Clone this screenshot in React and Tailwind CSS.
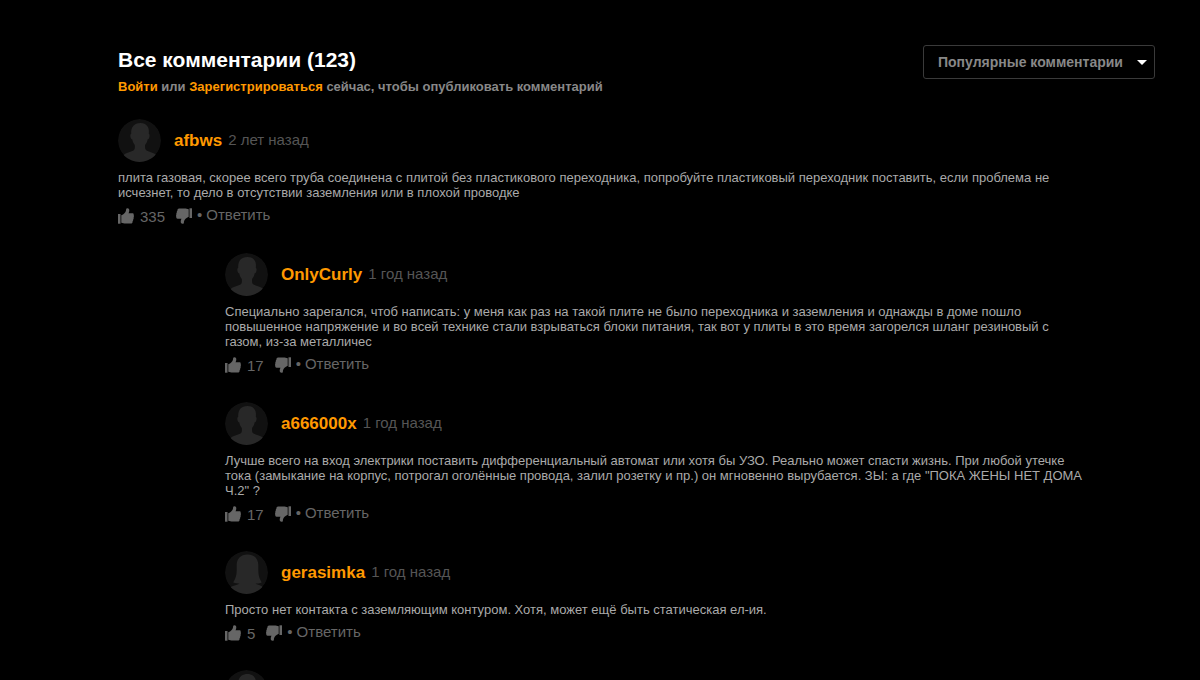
const comments = [
  {
    id: 1,
    author: "afbws",
    time: "2 лет назад",
    likes: 335,
    text: "плита газовая, скорее всего труба соединена с плитой без пластикового переходника, попробуйте пластиковый переходник поставить, если проблема не исчезнет, то дело в отсутствии заземления или в плохой проводке",
    replies: [
      {
        id: 2,
        author: "OnlyCurly",
        time: "1 год назад",
        likes: 17,
        text: "Специально зарегался, чтоб написать: у меня как раз на такой плите не было переходника и заземления и однажды в доме пошло повышенное напряжение и во всей технике стали взрываться блоки питания, так вот у плиты в это время загорелся шланг резиновый с газом, из-за металличес",
      },
      {
        id: 3,
        author: "a666000x",
        time: "1 год назад",
        likes: 17,
        text: 'Лучше всего на вход электрики поставить дифференциальный автомат или хотя бы УЗО. Реально может спасти жизнь. При любой утечке тока (замыкание на корпус, потрогал оголённые провода, залил розетку и пр.) он мгновенно вырубается. ЗЫ: а где "ПОКА ЖЕНЫ НЕТ ДОМА Ч.2" ?',
      },
      {
        id: 4,
        author: "gerasimka",
        time: "1 год назад",
        likes: 5,
        female: true,
        text: "Просто нет контакта с заземляющим контуром. Хотя, может ещё быть статическая ел-ия.",
      },
      { id: 5 },
    ],
  },
];

function Avatar({ female }) {
  return (
    <svg viewBox="0 0 43 43" className="h-[43px] w-[43px] shrink-0 rounded-full" aria-hidden="true">
      <circle cx="21.5" cy="21.5" r="21.5" fill="#111111" />
      {female ? (
        <path
          d="M22.500 3.500C15.500 3.500 11.800 8 11.700 14c0 6 .3 10-1.700 14-.6 1.500-1.500 2.500-1.700 3.500 2 .8 4.500 1 6.200 1.200-2 1.300-6 1.800-9 3.300V43h33v-6.500c-2-2.300-5.500-2.800-8-3.800 2 0 4.500-.4 6.200-1.200-.7-1.500-1.500-2.500-2-4-1.500-4-1.400-8-1.400-13.500C33.200 8 29.500 3.500 22.500 3.500z"
          fill="#282828"
        />
      ) : (
        <path
          d="M22.500 4C16 4 12.800 8 13.200 15c-1 .2-1 1.500-.7 3 .3 1.400.8 2.300 1.700 2.300.5 2.600 1.400 4.300 2.600 5.700.2 2.500.2 4.500-1.300 5.500C12.500 33 8 33.500 5.500 36V43h33v-7c-3-2.500-7-3-10-4.500-1.500-1-1.600-3-1.400-5.500 1.200-1.400 2.100-3.100 2.600-5.700.9 0 1.400-.9 1.700-2.300.3-1.500.3-2.800-.6-3C31.800 8 28.500 4 22.500 4z"
          fill="#282828"
        />
      )}
    </svg>
  );
}

function ThumbIcon({ className }) {
  return (
    <svg viewBox="0 0 16 16" fill="currentColor" className={className} aria-hidden="true">
      <path d="M0 6h2.500v9.700H0z" />
      <path d="M3.300 7.300C5.800 6.200 7.600 4.600 8 2.400L8.200.7C8.800-.1 10.500 0 11 1c.6 1.300.2 3-.5 4.200h3.900c1.100 0 1.600.9 1.200 1.800.5.600.5 1.600 0 2.200.3.800.1 1.600-.4 2.100.2.800-.1 1.500-.6 1.900.1 1.500-.6 2.400-1.700 2.400H7.600c-1.600 0-2.900-.5-4.300-.9z" />
    </svg>
  );
}

function Comment({ comment }) {
  return (
    <article className="pb-[25px]">
      <header className="flex items-center">
        <Avatar female={comment.female} />
        <a href="#" className="ml-[13px] text-[17px] font-bold text-[#ff9900]">{comment.author}</a>
        <time className="ml-1.5 text-[15px] text-[#555555]">{comment.time}</time>
      </header>
      <p className="mt-2 pr-[69px] text-[13px] leading-[15px] text-[#aaaaaa]">{comment.text}</p>
      <div className="mt-1 flex h-6 items-center text-[15px] leading-5 text-[#666666]">
        <button type="button" aria-label="Нравится">
          <ThumbIcon className="h-4 w-4" />
        </button>
        <span className="ml-1.5 pt-0.5">{comment.likes}</span>
        <button type="button" aria-label="Не нравится" className="ml-[11px]">
          <ThumbIcon className="h-4 w-4 rotate-180" />
        </button>
        <span className="ml-[5px] pb-0.5">•</span>
        <button type="button" className="ml-1 pb-0.5">Ответить</button>
      </div>
    </article>
  );
}

export default function App() {
  return (
    <div className="h-screen overflow-hidden bg-black pt-[45px] pr-[45px] pl-[118px] font-['Liberation_Sans',Arial,sans-serif]">
      <div className="flex items-start justify-between">
        <div>
          <h1 className="text-[21px] leading-[30px] font-bold text-white">Все комментарии (123)</h1>
          <p className="mt-1 text-[13px] leading-[15px] font-bold text-[#888888]">
            <a href="#" className="text-[#ff9900]">Войти</a> или{" "}
            <a href="#" className="text-[#ff9900]">Зарегистрироваться</a> сейчас, чтобы опубликовать комментарий
          </p>
        </div>
        <div className="relative">
          <select
            aria-label="Сортировка комментариев"
            className="h-[34px] w-[232px] appearance-none rounded-[3px] border border-[#3a3a3a] bg-black pl-3.5 text-sm font-bold text-[#888888]"
          >
            <option>Популярные комментарии</option>
            <option>Новые комментарии</option>
          </select>
          <svg viewBox="0 0 10 5" className="pointer-events-none absolute top-[15px] right-2 h-[5px] w-[10px]" aria-hidden="true">
            <path d="M0 0h10L5 5z" fill="#ffffff" />
          </svg>
        </div>
      </div>

      <div className="mt-[25px]">
        {comments.map((comment) => (
          <div key={comment.id}>
            <Comment comment={comment} />
            <div className="ml-[107px]">
              {comment.replies.map((reply) =>
                reply.author ? <Comment key={reply.id} comment={reply} /> : <Avatar key={reply.id} />
              )}
            </div>
          </div>
        ))}
      </div>
    </div>
  );
}
